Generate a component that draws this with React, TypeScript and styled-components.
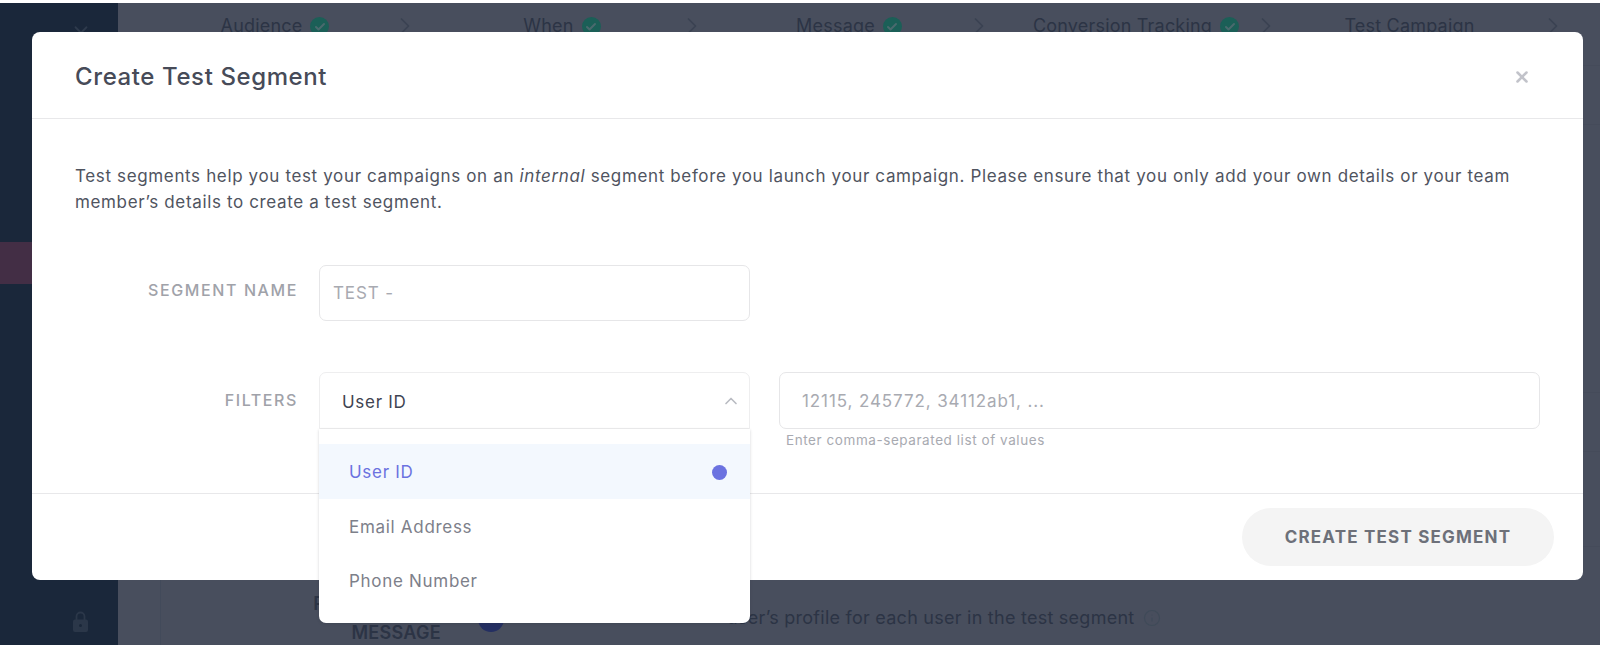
import { FunctionComponent } from "react";
import styled, { createGlobalStyle } from "styled-components";
import { Check, ChevronDown, ChevronRight, ChevronUp, Info, X } from "lucide-react";

const GlobalStyle = createGlobalStyle`
  html, body {
    margin: 0;
    padding: 0;
    background: #ffffff;
  }

  * {
    box-sizing: border-box;
  }
`;

const steps = [
  { label: "Audience", done: true },
  { label: "When", done: true },
  { label: "Message", done: true },
  { label: "Conversion Tracking", done: true },
  { label: "Test Campaign", done: false },
];

const options = ["User ID", "Email Address", "Phone Number"];

const App: FunctionComponent = () => {
  return (
    <Page>
      <GlobalStyle />
      <Backdrop>
        <Sidebar>
          <SidebarChevron>
            <ChevronDown size={22} />
          </SidebarChevron>
          <SidebarActive />
          <SidebarLock>
            <svg width="15" height="21" viewBox="0 0 15 21">
              <path d="M3.5 9V5.5a4 4 0 0 1 8 0V9" fill="none" stroke="currentColor" strokeWidth="1.8" />
              <path d="M2 8.5h11a2 2 0 0 1 2 2V19a2 2 0 0 1-2 2H2a2 2 0 0 1-2-2v-8.500a2 2 0 0 1 2-2z" fill="currentColor" />
              <circle cx="7.5" cy="14.500" r="1.500" fill="#1a273a" />
            </svg>
          </SidebarLock>
        </Sidebar>
        <Main>
          <StepBar>
            {steps.map((step) => (
              <Step key={step.label}>
                <StepLabel>
                  {step.label}
                  {step.done && (
                    <StepCheck>
                      <Check size={12} strokeWidth={4} />
                    </StepCheck>
                  )}
                </StepLabel>
                <StepChevron>
                  <ChevronRight size={28} strokeWidth={1.5} />
                </StepChevron>
              </Step>
            ))}
          </StepBar>
          <Panel>
            <PanelRow $height={59} />
            <PanelRow $height={268} />
            <PanelRow $height={59} />
            <PanelRow $height={95} />
            <PreviewRow>
              <PreviewLabel>
                PERSONALIZE
                <br />
                MESSAGE
              </PreviewLabel>
              <PreviewDot />
              <PreviewText>
                user&rsquo;s profile for each user in the test segment
                <Info size={18} strokeWidth={1.5} />
              </PreviewText>
            </PreviewRow>
          </Panel>
        </Main>
      </Backdrop>

      <Modal>
        <ModalHeader>
          <ModalTitle>Create Test Segment</ModalTitle>
          <CloseButton>
            <X size={18} strokeWidth={3.4} />
          </CloseButton>
        </ModalHeader>
        <ModalBody>
          <Intro>
            Test segments help you test your campaigns on an <em>internal</em> segment before you
            launch your campaign. Please ensure that you only add your own details or your team
            member&rsquo;s details to create a test segment.
          </Intro>
          <FormRow $gap={51}>
            <FieldLabel $lift={3}>SEGMENT NAME</FieldLabel>
            <TextInput $width={431} $height={56} $inset={13} placeholder="TEST -" />
          </FormRow>
          <FormRow $gap={0}>
            <FieldLabel $lift={0}>FILTERS</FieldLabel>
            <SelectWrap>
              <SelectControl>
                <SelectValue>User ID</SelectValue>
                <ChevronUp size={20} strokeWidth={2} />
              </SelectControl>
              <Dropdown>
                {options.map((option, index) => (
                  <DropdownOption key={option} $selected={index === 0}>
                    {option}
                    {index === 0 && <SelectedDot />}
                  </DropdownOption>
                ))}
              </Dropdown>
            </SelectWrap>
            <ValuesField>
              <TextInput $width={761} $height={57} $inset={22} placeholder="12115, 245772, 34112ab1, ..." />
              <Hint>Enter comma-separated list of values</Hint>
            </ValuesField>
          </FormRow>
        </ModalBody>
        <ModalFooter>
          <CreateButton>CREATE TEST SEGMENT</CreateButton>
        </ModalFooter>
      </Modal>
    </Page>
  );
};

const Page = styled.div`
  position: relative;
  width: 1618px;
  height: 650px;
  padding: 3px 18px 5px 0;
  overflow: hidden;
  font-family: Inter, "Liberation Sans", sans-serif;
`;

const Backdrop = styled.div`
  display: flex;
  height: 100%;
  background: #484e5d;
`;

const Sidebar = styled.div`
  display: flex;
  flex-direction: column;
  width: 118px;
  flex-shrink: 0;
  padding-top: 16px;
  background: #1a273a;
  color: #2e3a4c;
`;

const SidebarChevron = styled.div`
  display: flex;
  padding-left: 70px;
`;

const SidebarActive = styled.div`
  height: 42px;
  margin-top: 201px;
  background: #432e45;
`;

const SidebarLock = styled.div`
  display: flex;
  margin-top: auto;
  margin-bottom: 13px;
  padding-left: 73px;
  color: #2b3749;
`;

const Main = styled.div`
  display: flex;
  flex-direction: column;
  flex: 1;
  min-width: 0;
  overflow: hidden;
`;

const StepBar = styled.div`
  display: grid;
  grid-template-columns: repeat(5, 287px);
  height: 63px;
  flex-shrink: 0;
  border-bottom: 1px solid #454b5a;
`;

const Step = styled.div`
  position: relative;
  text-align: center;
  padding-top: 11px;
  font-size: 18px;
  line-height: 24px;
  letter-spacing: 0.2px;
  color: #2c3445;
`;

const StepLabel = styled.span`
  position: relative;
  display: inline-block;
`;

const StepCheck = styled.span`
  position: absolute;
  top: 3px;
  right: -27px;
  display: flex;
  align-items: center;
  justify-content: center;
  width: 19px;
  height: 19px;
  border-radius: 50%;
  background: #1b5f57;
  color: #4a6a6e;
`;

const StepChevron = styled.span`
  position: absolute;
  top: 9px;
  right: -14px;
  display: flex;
  color: #3a4252;
`;

const Panel = styled.div`
  display: flex;
  flex-direction: column;
  flex: 1;
  min-height: 0;
  margin-left: 42px;
  border-left: 1px solid #424a5a;
`;

const PanelRow = styled.div<{ $height: number }>`
  height: ${({ $height }) => $height}px;
  flex-shrink: 0;
  border-bottom: 1px solid #454b5a;
`;

const PreviewRow = styled.div`
  display: flex;
  align-items: flex-start;
  padding-top: 42px;
`;

const PreviewLabel = styled.div`
  width: 280px;
  flex-shrink: 0;
  font-size: 18px;
  font-weight: 600;
  line-height: 29px;
  letter-spacing: 0.3px;
  text-align: right;
  color: #2c3445;
`;

const PreviewDot = styled.div`
  width: 26px;
  height: 26px;
  margin: 17px 0 0 37px;
  flex-shrink: 0;
  border-radius: 50%;
  background: #242f62;
`;

const PreviewText = styled.div`
  display: flex;
  align-items: center;
  gap: 9px;
  margin: 17px 0 0 223px;
  font-size: 18px;
  line-height: 24px;
  letter-spacing: 0.25px;
  white-space: nowrap;
  color: #2c3445;

  svg {
    color: #3f4a58;
  }
`;

const Modal = styled.div`
  position: absolute;
  top: 32px;
  left: 32px;
  display: flex;
  flex-direction: column;
  width: 1551px;
  height: 548px;
  border-radius: 8px;
  background: #ffffff;
`;

const ModalHeader = styled.div`
  display: flex;
  align-items: center;
  justify-content: space-between;
  height: 87px;
  flex-shrink: 0;
  padding: 3px 43px 0;
  border-bottom: 1px solid #e8e8ea;
`;

const ModalTitle = styled.h1`
  margin: 0;
  font-size: 24px;
  font-weight: 500;
  letter-spacing: 0.6px;
  color: #474b58;
`;

const CloseButton = styled.div`
  display: flex;
  margin-right: 9px;
  color: #c2c3ca;
`;

const ModalBody = styled.div`
  display: flex;
  flex-direction: column;
  height: 374px;
  flex-shrink: 0;
  padding: 44px 43px 0;
`;

const Intro = styled.p`
  margin: 0 0 50px;
  font-size: 17px;
  line-height: 26px;
  letter-spacing: 0.64px;
  color: #50545f;
`;

const FormRow = styled.div<{ $gap: number }>`
  display: flex;
  align-items: flex-start;
  margin-bottom: ${({ $gap }) => $gap}px;
`;

const FieldLabel = styled.label<{ $lift: number }>`
  width: 223px;
  height: 56px;
  margin-right: 21px;
  flex-shrink: 0;
  padding-bottom: ${({ $lift }) => $lift * 2}px;
  display: flex;
  align-items: center;
  justify-content: flex-end;
  font-size: 16px;
  font-weight: 500;
  letter-spacing: 1.6px;
  color: #a0a2a9;
`;

const TextInput = styled.input<{ $width: number; $height: number; $inset: number }>`
  display: block;
  width: ${({ $width }) => $width}px;
  height: ${({ $height }) => $height}px;
  padding: 0 ${({ $inset }) => $inset}px;
  border: 1px solid #e6e6e8;
  border-radius: 7px;
  outline: none;
  background: #ffffff;
  font-family: inherit;
  font-size: 17px;
  letter-spacing: 0.9px;
  color: #4a4f5c;

  &::placeholder {
    color: #a8aab1;
    opacity: 1;
  }
`;

const SelectWrap = styled.div`
  position: relative;
  width: 431px;
  flex-shrink: 0;
  margin-right: 29px;
`;

const SelectControl = styled.div`
  display: flex;
  align-items: center;
  justify-content: space-between;
  height: 57px;
  padding: 0 8px 0 22px;
  border: 1px solid #eeeeef;
  border-radius: 7px 7px 0 0;
  background: #ffffff;

  svg {
    color: #b9bbc2;
  }
`;

const SelectValue = styled.span`
  padding-top: 2px;
  font-size: 17px;
  letter-spacing: 0.7px;
  color: #3f4452;
`;

const Dropdown = styled.div`
  position: absolute;
  top: 57px;
  left: 0;
  width: 100%;
  padding: 15px 0 15px;
  border-radius: 0 0 7px 7px;
  background: #ffffff;
  box-shadow: 0 1px 3px rgba(40, 45, 60, 0.22);
`;

const DropdownOption = styled.div<{ $selected: boolean }>`
  display: flex;
  align-items: center;
  justify-content: space-between;
  height: 54.6px;
  padding: 2px 23px 0 30px;
  font-size: 17px;
  letter-spacing: 0.7px;
  color: ${({ $selected }) => ($selected ? "#6b72e0" : "#7d808a")};
  background: ${({ $selected }) => ($selected ? "#f3f8fe" : "#ffffff")};
`;

const SelectedDot = styled.span`
  width: 15px;
  height: 15px;
  border-radius: 50%;
  background: #6b72e0;
`;

const ValuesField = styled.div`
  display: flex;
  flex-direction: column;
  width: 761px;
  flex-shrink: 0;
`;

const Hint = styled.div`
  margin: 3px 0 0 7px;
  font-size: 13.5px;
  line-height: 17px;
  letter-spacing: 0.57px;
  color: #a8aab1;
`;

const ModalFooter = styled.div`
  display: flex;
  align-items: center;
  justify-content: flex-end;
  flex: 1;
  padding-right: 29px;
  border-top: 1px solid #e8e8ea;
`;

const CreateButton = styled.button`
  width: 312px;
  height: 58px;
  border: none;
  border-radius: 29px;
  background: #f4f4f4;
  font-family: inherit;
  font-size: 17px;
  font-weight: 700;
  letter-spacing: 1.2px;
  color: #6d7079;
`;

export default App;
